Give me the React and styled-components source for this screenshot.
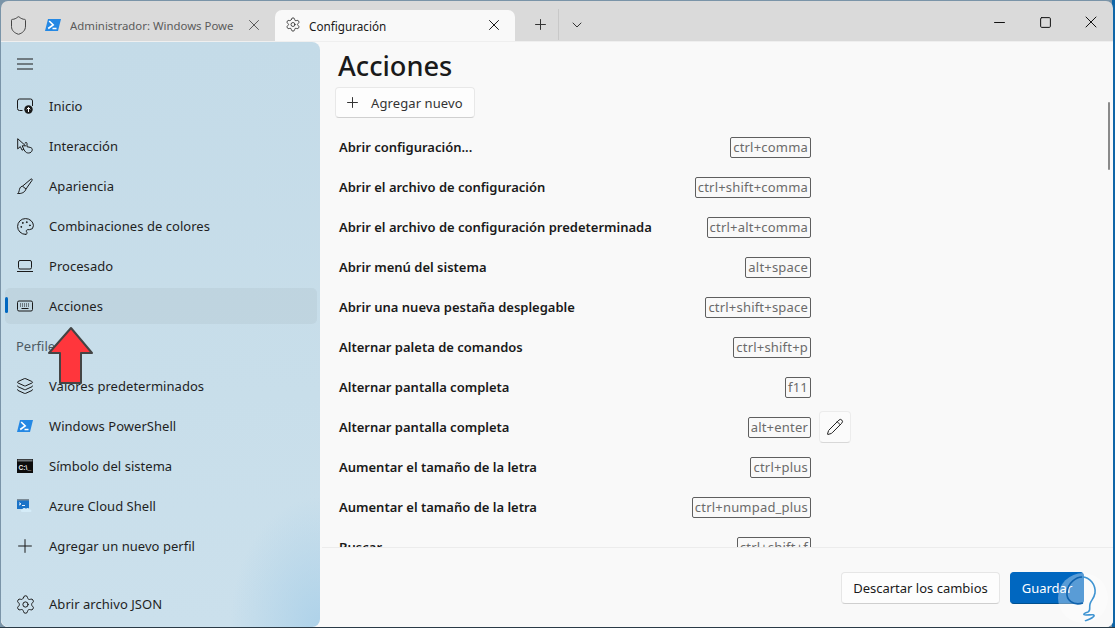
import React from 'react';
import styled, { createGlobalStyle } from 'styled-components';
import { Shield, X, Plus, ChevronDown, Minus, Square, Settings, Palette, Layers, Pencil } from 'lucide-react';

const GlobalStyle = createGlobalStyle`
  html, body { margin: 0; padding: 0; height: 100%; background: #1d3346; overflow: hidden; }
  * { box-sizing: border-box; }
  body { font-family: "Noto Sans", "Open Sans", sans-serif; }
`;

const Stage = styled.div`
  position: relative;
  width: 1115px;
  height: 628px;
  padding: 1px 2px 1px 1px;
  background:
    linear-gradient(0deg, #2a3a46 1px, transparent 1px),
    linear-gradient(90deg, #7a94a8 99.7%, #0f66a8 99.7%);
`;

const Window = styled.div`
  width: 100%;
  height: 100%;
  display: flex;
  flex-direction: column;
  background: #dadada;
  border-radius: 7px;
  overflow: hidden;
`;

const TitleBar = styled.div`
  height: 40px;
  flex: none;
  display: flex;
  align-items: flex-end;
  color: #1a1a1a;
`;

const ShieldBox = styled.div`
  width: 34px;
  height: 40px;
  display: flex;
  align-items: center;
  justify-content: center;
  color: #444;
  padding-top: 9px;
`;

const Tab = styled.div`
  width: ${p => p.$width}px;
  height: 31px;
  flex: none;
  display: flex;
  align-items: center;
  padding: 0 12px 2px 10px;
  background: ${p => (p.$active ? '#f9f9f9' : 'transparent')};
  border-radius: 7px 7px 0 0;
  color: ${p => (p.$active ? '#1a1a1a' : '#5a5a5a')};
  font-size: ${p => (p.$active ? '11.7px' : '11.4px')};
`;

const TabIcon = styled.span`
  width: 16px;
  height: 16px;
  flex: none;
  display: flex;
  align-items: center;
  justify-content: center;
`;

const TabLabel = styled.span`
  flex: 1;
  margin: 2px 0 0 ${p => (p.$active ? '8px' : '9px')};
  white-space: nowrap;
  overflow: hidden;
`;

const TabActions = styled.div`
  height: 31px;
  display: flex;
  align-items: center;
  margin-left: 7px;
  padding-bottom: 2px;
  color: #333;
`;

const TabAction = styled.div`
  width: 36px;
  height: 31px;
  display: flex;
  align-items: center;
  justify-content: center;
  & + & { border-left: 1px solid #c8c8c8; }
`;

const WindowControls = styled.div`
  margin-left: auto;
  height: 40px;
  display: flex;
  align-items: center;
`;

const ControlButton = styled.div`
  width: 46px;
  height: 40px;
  display: flex;
  align-items: center;
  justify-content: center;
  padding: 2px 0 0 2px;
  color: #111;
`;

const Body = styled.div`
  flex: 1;
  min-height: 0;
  display: flex;
  background: #f9f9f9;
  border-top: 1px solid #efefef;
`;

const Sidebar = styled.nav`
  width: 319px;
  flex: none;
  display: flex;
  flex-direction: column;
  padding: 4px 3px 4px 4px;
  border-radius: 0 8px 8px 8px;
  background:
    radial-gradient(ellipse 90px 130px at 100% 100%, #aed2e9 0%, rgba(174, 210, 233, 0) 100%),
    linear-gradient(180deg, #c4dbe8 0%, #c8deea 60%, #cbe0ec 100%);
`;

const MenuButton = styled.div`
  height: 36px;
  padding-left: 12px;
  display: flex;
  align-items: center;
  color: #222;
  margin-bottom: 4px;
`;

const NavItem = styled.div`
  position: relative;
  height: 36px;
  margin: 2px 0;
  flex: none;
  display: flex;
  align-items: center;
  gap: 16px;
  padding-left: 12px;
  border-radius: 5px;
  font-size: 13px;
  letter-spacing: 0.04px;
  color: #1f1f1f;
  background: ${p => (p.$active ? 'rgba(0, 0, 0, 0.04)' : 'transparent')};

  ${p => p.$active && `
    &::before {
      content: '';
      position: absolute;
      left: 0;
      top: 9px;
      width: 3px;
      height: 16px;
      border-radius: 2px;
      background: #0067c0;
    }
  `}
`;

const IconSlot = styled.span`
  width: 16px;
  height: 16px;
  flex: none;
  display: flex;
  align-items: center;
  justify-content: center;
  color: #1a1a1a;

  svg { flex: none; }
`;

const SectionTitle = styled.div`
  height: 40px;
  padding-left: 11px;
  display: flex;
  align-items: center;
  font-size: 13px;
  color: #4d5a63;
`;

const FooterItem = styled(NavItem)`
  margin-top: auto;
  margin-bottom: 1px;
`;

const Content = styled.main`
  flex: 1;
  min-width: 0;
  display: flex;
  flex-direction: column;
  margin-left: 2px;
  position: relative;
`;

const Scroller = styled.div`
  flex: 1;
  min-height: 0;
  overflow: hidden;
  padding: 5px 0 0 13px;
`;

const Heading = styled.h1`
  margin: 0 0 0 3px;
  font-size: 27.2px;
  line-height: 38px;
  font-weight: 500;
  color: #1a1a1a;
`;

const AddButton = styled.div`
  width: 140px;
  height: 31px;
  margin-top: 2px;
  display: inline-flex;
  align-items: center;
  gap: 10px;
  padding-left: 8px;
  background: #fdfdfd;
  border: 1px solid #e8e8e8;
  border-bottom-color: #d0d0d0;
  border-radius: 4px;
  font-size: 13px;
  letter-spacing: 0.1px;
  color: #333;
`;

const ActionList = styled.div`
  margin-top: 9px;
  display: flex;
  flex-direction: column;
`;

const ActionRow = styled.div`
  position: relative;
  width: 476px;
  height: 40px;
  flex: none;
  display: flex;
  align-items: center;
  justify-content: space-between;
  padding-left: 4px;
  font-size: 13px;
  font-weight: 600;
  color: #1a1a1a;
`;

const KeyChord = styled.span`
  height: 21px;
  display: flex;
  align-items: center;
  padding: 0 2px;
  border: 1px solid #5f5f5f;
  border-radius: 2px;
  font-size: 13px;
  font-weight: 400;
  letter-spacing: 0.2px;
  color: #6b6b6b;
`;

const EditButton = styled.div`
  position: absolute;
  left: 484px;
  top: 4px;
  width: 32px;
  height: 32px;
  display: flex;
  align-items: center;
  justify-content: center;
  background: #fbfbfb;
  border: 1px solid #ececec;
  border-bottom-color: #d8d8d8;
  border-radius: 4px;
  color: #222;
`;

const Footer = styled.div`
  height: 80px;
  flex: none;
  display: flex;
  align-items: flex-start;
  justify-content: flex-end;
  gap: 10px;
  padding: 24px 29px 0 0;
  background: #f9f9f9;
  border-top: 1px solid #ececec;
`;

const FooterButton = styled.div`
  height: 32px;
  display: flex;
  align-items: center;
  justify-content: center;
  width: ${p => p.$width}px;
  border-radius: 4px;
  font-size: 13px;
  background: ${p => (p.$primary ? '#0067c0' : '#fdfdfd')};
  color: ${p => (p.$primary ? '#fff' : '#1a1a1a')};
  border: 1px solid ${p => (p.$primary ? '#0067c0' : '#e6e6e6')};
  border-bottom-color: ${p => (p.$primary ? '#00508f' : '#cfcfcf')};
`;

const ScrollThumb = styled.div`
  position: absolute;
  right: 3px;
  top: 60px;
  width: 2px;
  height: 68px;
  border-radius: 1px;
  background: #8a8a8a;
`;

const Arrow = styled.svg`
  position: absolute;
  left: 47px;
  top: 326px;
`;

const Badge = styled.svg`
  position: absolute;
  left: 1058px;
  top: 573px;
`;

const line = { fill: 'none', stroke: 'currentColor', strokeWidth: 1 };

const MenuIcon = () => (
  <svg width="16" height="16" viewBox="0 0 16 16" {...line}>
    <path d="M0 3h16M0 8h16M0 13h16" />
  </svg>
);

const HomeIcon = () => (
  <svg width="16" height="16" viewBox="0 0 16 16">
    <path d="M5.5 12.5H2.5a2 2 0 0 1-2-2V3a2 2 0 0 1 2-2h11a2 2 0 0 1 2 2v5" {...line} />
    <circle cx="11.5" cy="11.5" r="4.2" fill="#1a1a1a" />
    <path d="M11.5 14V9.5M9.7 11.3l1.8-1.8 1.8 1.8" fill="none" stroke="#fff" strokeWidth="1" />
  </svg>
);

const InteractionIcon = () => (
  <svg width="16" height="16" viewBox="0 0 16 16" {...line}>
    <path d="M.7.7v10.2l2.6-2.3 1.8 3.6 1.7-.9-1.6-3.5h3.4z" />
    <path d="M8 5.5c0-1.4 2-1.4 2 0v3.2l3.2.7c1.6.4 2.3 1.4 2 2.8-.4 1.6-1.6 2.8-3.7 2.8-1.6 0-2.8-.6-3.6-2L6.4 11" />
  </svg>
);

const BrushIcon = () => (
  <svg width="16" height="16" viewBox="0 0 16 16" {...line}>
    <path d="M13.8 1.2c1-.7 1.8.1 1.2 1.2L9 11 5.5 8.2z" />
    <path d="M5.5 8.2C3 8.5 2.5 11 2.2 12.7 2 14 1.5 15 .6 15.5c3.6.4 7.4-1 8.4-4.5" />
  </svg>
);

const LaptopIcon = () => (
  <svg width="16" height="16" viewBox="0 0 16 16" {...line}>
    <rect x="1.5" y="2.5" width="13" height="8.5" rx="1.5" />
    <path d="M0 13.5h16" />
  </svg>
);

const KeyboardIcon = () => (
  <svg width="16" height="16" viewBox="0 0 16 16">
    <rect x=".5" y="3" width="15" height="10" rx="1.5" {...line} />
    <path d="M3 6h10M3 8h10" stroke="currentColor" strokeWidth="1" strokeDasharray="1 1" />
    <path d="M4.5 10.5h7" stroke="currentColor" strokeWidth="1" />
  </svg>
);

const PowerShellIcon = () => (
  <svg width="16" height="16" viewBox="0 0 16 16">
    <path d="M3 2h13l-3 12H0z" fill="#2488e4" />
    <path d="M4.2 4l4 3.8-5 3.7" fill="none" stroke="#fff" strokeWidth="1.6" />
    <path d="M7.5 11.5h4" stroke="#fff" strokeWidth="1.5" />
  </svg>
);

const CmdIcon = () => (
  <svg width="16" height="14" viewBox="0 0 16 14">
    <rect width="16" height="14" fill="#0c0c0c" />
    <rect x=".5" y=".5" width="15" height="2" fill="#6f7478" />
    <text x="1.6" y="10.5" fontSize="6.5" fontWeight="700" fontFamily="Liberation Sans, sans-serif" fill="#f2f2f2">C:\_</text>
  </svg>
);

const AzureIcon = () => (
  <svg width="16" height="16" viewBox="0 0 16 16">
    <rect x="0" y="1" width="12" height="10" fill="#1a73c8" />
    <rect x="0" y="1" width="12" height="1.5" fill="#7c8b96" />
    <path d="M2 4.7l2 1.2-2 1.2M5 7.5h3" stroke="#fff" strokeWidth="0.9" fill="none" />
    <path d="M5 14c-1.4 0-1.6-2.2 0-2.4.5-1.6 3-2.4 4-.8 1-1.2 3.2-.8 3.5.8 2.3-.2 2.5 2.4.5 2.4z" fill="#d5ecf8" />
  </svg>
);

const stroke = { strokeWidth: 1, absoluteStrokeWidth: true };

const mainNav = [
  ['Inicio', <HomeIcon />],
  ['Interacción', <InteractionIcon />],
  ['Apariencia', <BrushIcon />],
  ['Combinaciones de colores', <Palette size={19} {...stroke} />],
  ['Procesado', <LaptopIcon />],
  ['Acciones', <KeyboardIcon />, true],
];

const profiles = [
  ['Valores predeterminados', <Layers size={18} {...stroke} />],
  ['Windows PowerShell', <PowerShellIcon />],
  ['Símbolo del sistema', <CmdIcon />],
  ['Azure Cloud Shell', <AzureIcon />],
  ['Agregar un nuevo perfil', <Plus size={22} {...stroke} />],
];

const actions = [
  ['Abrir configuración...', 'ctrl+comma'],
  ['Abrir el archivo de configuración', 'ctrl+shift+comma'],
  ['Abrir el archivo de configuración predeterminada', 'ctrl+alt+comma'],
  ['Abrir menú del sistema', 'alt+space'],
  ['Abrir una nueva pestaña desplegable', 'ctrl+shift+space'],
  ['Alternar paleta de comandos', 'ctrl+shift+p'],
  ['Alternar pantalla completa', 'f11'],
  ['Alternar pantalla completa', 'alt+enter', true],
  ['Aumentar el tamaño de la letra', 'ctrl+plus'],
  ['Aumentar el tamaño de la letra', 'ctrl+numpad_plus'],
  ['Buscar', 'ctrl+shift+f'],
];

export default function App() {
  return (
    <>
      <GlobalStyle />
      <Stage>
        <Window>
          <TitleBar>
            <ShieldBox><Shield size={21} {...stroke} /></ShieldBox>
            <Tab $width={240}>
              <TabIcon><PowerShellIcon /></TabIcon>
              <TabLabel>Administrador: Windows Powe</TabLabel>
              <X size={18} {...stroke} />
            </Tab>
            <Tab $width={240} $active>
              <TabIcon><Settings size={21} {...stroke} /></TabIcon>
              <TabLabel $active>Configuración</TabLabel>
              <X size={18} {...stroke} />
            </Tab>
            <TabActions>
              <TabAction><Plus size={17} {...stroke} /></TabAction>
              <TabAction><ChevronDown size={16} {...stroke} /></TabAction>
            </TabActions>
            <WindowControls>
              <ControlButton><Minus size={17} {...stroke} /></ControlButton>
              <ControlButton><Square size={13} {...stroke} /></ControlButton>
              <ControlButton><X size={20} {...stroke} /></ControlButton>
            </WindowControls>
          </TitleBar>
          <Body>
            <Sidebar>
              <MenuButton><IconSlot><MenuIcon /></IconSlot></MenuButton>
              {mainNav.map(([label, icon, active]) => (
                <NavItem key={label} $active={active}>
                  <IconSlot>{icon}</IconSlot>
                  {label}
                </NavItem>
              ))}
              <SectionTitle>Perfiles</SectionTitle>
              {profiles.map(([label, icon]) => (
                <NavItem key={label}>
                  <IconSlot>{icon}</IconSlot>
                  {label}
                </NavItem>
              ))}
              <FooterItem>
                <IconSlot><Settings size={21} {...stroke} /></IconSlot>
                Abrir archivo JSON
              </FooterItem>
            </Sidebar>
            <Content>
              <Scroller>
                <Heading>Acciones</Heading>
                <AddButton><Plus size={17} {...stroke} />Agregar nuevo</AddButton>
                <ActionList>
                  {actions.map(([label, keys, editable], i) => (
                    <ActionRow key={i}>
                      {label}
                      <KeyChord>{keys}</KeyChord>
                      {editable && <EditButton><Pencil size={18} {...stroke} /></EditButton>}
                    </ActionRow>
                  ))}
                </ActionList>
              </Scroller>
              <Footer>
                <FooterButton $width={159}>Descartar los cambios</FooterButton>
                <FooterButton $width={74} $primary>Guardar</FooterButton>
              </Footer>
              <ScrollThumb />
            </Content>
          </Body>
        </Window>
        <Arrow width="48" height="62" viewBox="0 0 48 62">
          <path d="M24 2L45 27H34V57H13V27H2z" fill="#ff363c" stroke="#444" strokeWidth="2" strokeLinejoin="round" />
        </Arrow>
        <Badge width="50" height="50" viewBox="0 0 50 50">
          <circle cx="25" cy="25" r="25" fill="#fff" fillOpacity="0.35" />
          <path d="M25 30C15 33 8 27 9 19 10 10 18 4 24 4" fill="none" stroke="#0f62ad" strokeWidth="1.6" />
          <path d="M24 4C32 4 38 12 37 20 36 26 33 27 32 31 31 35 33 38 30 39 26 40 24 42 28 42 32 42 37 41 36 43 34 46 28 47 27 48" fill="none" stroke="#3f94d2" strokeWidth="1.6" />
        </Badge>
      </Stage>
    </>
  );
}
